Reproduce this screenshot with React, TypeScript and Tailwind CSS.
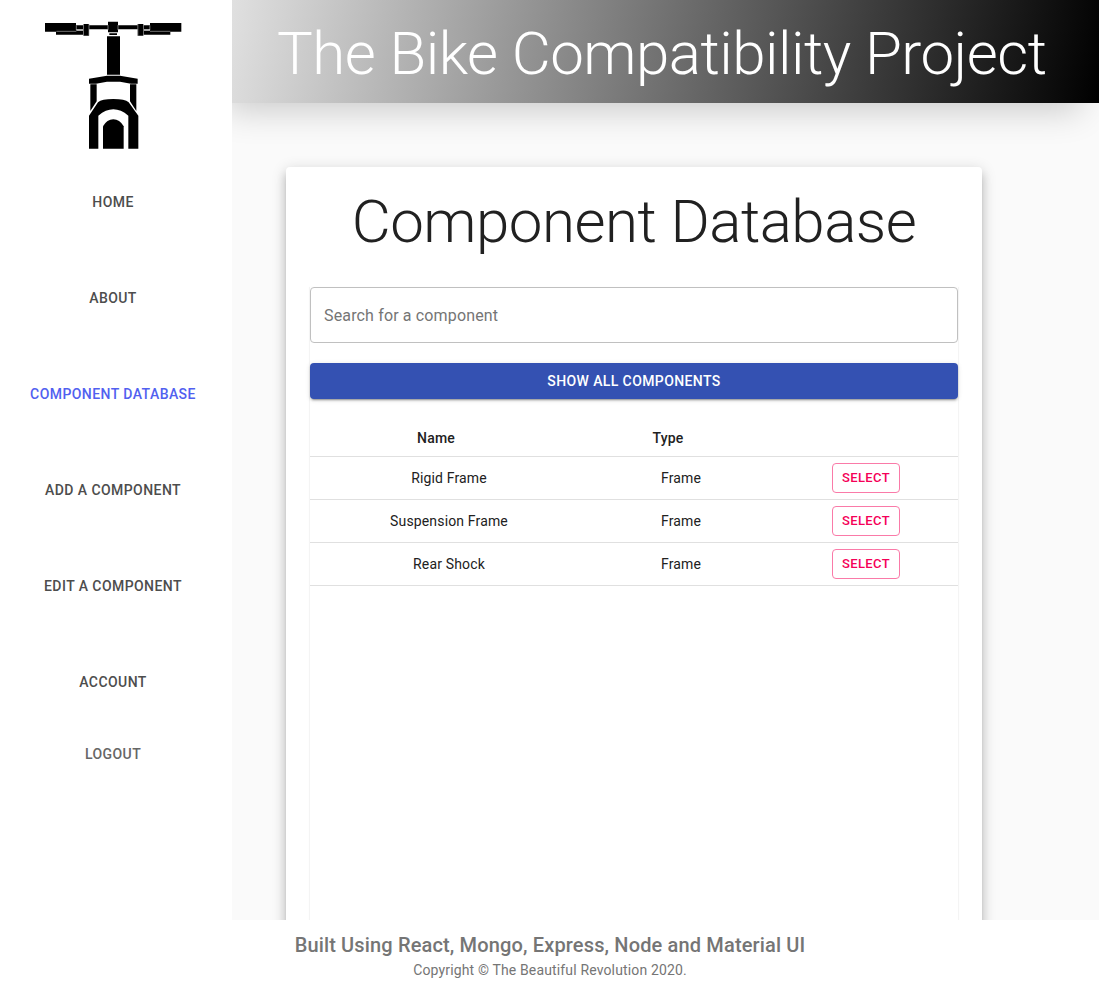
import React from "react";

const navItems = [
  { label: "Home" },
  { label: "About" },
  { label: "Component Database", active: true },
  { label: "Add a Component" },
  { label: "Edit a Component" },
  { label: "Account" },
];

const components = [
  { name: "Rigid Frame", type: "Frame" },
  { name: "Suspension Frame", type: "Frame" },
  { name: "Rear Shock", type: "Frame" },
];

function Logo() {
  return (
    <svg width="166" height="150" viewBox="0 0 498 450" fill="#000" aria-hidden="true">
      <path d="M45 39H138V46H160V42H177V46H234V35H264V46H323V42H340V46H360V39H454V65H421V74H340V77H323V58H264V67H234V58H177V77H160V74H78V65H45Z" />
      <path d="M139 46V60M359.500 46V60M160.500 42V77M177 42V77M234 45V60M264 45V60M323.500 42V77M340.500 42V77M79 64H139M360 64H421" stroke="#a8a8a8" strokeWidth="2" fill="none" />
      <path d="M139 60H159M342 60H360" stroke="#ddd" strokeWidth="4" fill="none" />
      <path d="M238 70H261V75H238ZM231 79H270V194H231Z" />
      <path d="M231 197H270L323 206V221H303L270 215H231L198 221H177V206Z" />
      <path d="M181 223H200V274L181 303ZM300 223H319V303L300 274Z" />
      <path d="M177 416V317L204 277Q215 267 250 267Q285 267 296 277L325 317V416H295V317Q250 279 205 317V416Z" />
      <path d="M219 416V349Q231 328 250 328Q269 328 281 349V416Z" />
    </svg>
  );
}

function Sidebar() {
  return (
    <aside className="relative z-10 flex w-[232px] shrink-0 flex-col bg-white">
      <div className="h-[154px] pl-[30px] pt-[10px]">
        <Logo />
      </div>
      <nav className="flex w-[226px] flex-col text-center text-sm font-medium uppercase tracking-[0.031em]">
        {navItems.map((item) => (
          <a
            key={item.label}
            className={item.active ? "flex h-24 items-center justify-center text-[#5160f0]" : "flex h-24 items-center justify-center text-[#4d4d4d]"}
          >
            {item.label}
          </a>
        ))}
        <a className="flex h-12 items-center justify-center text-[#666666]">Logout</a>
      </nav>
    </aside>
  );
}

function ComponentTable() {
  return (
    <table className="mt-5 w-full table-fixed border-collapse text-center text-sm leading-6 tracking-[0.01071em]">
      <colgroup>
        <col className="w-[286px]" />
        <col className="w-[178px]" />
        <col className="w-[184px]" />
      </colgroup>
      <thead>
        <tr className="h-[37px] border-b border-[#e0e0e0]">
          <th className="pr-[34px] pt-px font-medium">Name</th>
          <th className="pr-[34px] pt-px font-medium">Type</th>
          <th />
        </tr>
      </thead>
      <tbody>
        {components.map((c) => (
          <tr key={c.name} className="h-[43px] border-b border-[#e0e0e0]">
            <td className="pr-2">{c.name}</td>
            <td className="pr-2">{c.type}</td>
            <td>
              <button className="mx-auto flex h-[30px] w-[68px] items-center justify-center rounded border border-[#fa7aa8] pt-px text-[13px] font-medium tracking-[0.02857em] text-[#f50057]">
                SELECT
              </button>
            </td>
          </tr>
        ))}
      </tbody>
    </table>
  );
}

export default function App() {
  return (
    <div className="flex h-[984px] flex-col overflow-hidden bg-white font-['Roboto',sans-serif] text-[#212121]">
      <div className="flex h-[920px] shrink-0 overflow-hidden">
        <Sidebar />
        <main className="flex min-w-0 flex-1 flex-col bg-[#fafafa]">
          <header className="h-[103px] shrink-0 bg-[linear-gradient(100deg,#e0e0e0,#000)] pl-[45px] pt-[18px] shadow-[-12px_14px_34px_-6px_rgba(0,0,0,0.19)]">
            <h1 className="whitespace-nowrap text-[60px] font-light leading-[72px] tracking-[-0.00833em] text-white">
              The Bike Compatibility Project
            </h1>
          </header>
          <section className="ml-[54px] mt-16 h-[900px] w-[696px] shrink-0 rounded bg-white px-6 pt-[19px] shadow-[0_5px_5px_-3px_rgba(0,0,0,0.2),0_8px_10px_1px_rgba(0,0,0,0.14),0_3px_14px_2px_rgba(0,0,0,0.12)]">
            <h2 className="whitespace-nowrap text-center text-[60px] font-light leading-[72px] tracking-[-0.00833em]">
              Component Database
            </h2>
            <div className="mt-[29px] h-[760px] shadow-[0_1px_1px_1px_rgba(0,0,0,0.045)]">
              <input
                className="block h-14 w-full rounded border border-[#c0c0c0] bg-white px-[13px] text-base tracking-[0.00938em] placeholder:text-[#757575]"
                placeholder="Search for a component"
              />
              <button className="mt-5 block h-9 w-full rounded bg-[#3451b2] text-sm font-medium tracking-[0.02857em] text-white shadow-[0_3px_1px_-2px_rgba(0,0,0,0.2),0_2px_2px_0_rgba(0,0,0,0.14),0_1px_5px_0_rgba(0,0,0,0.12)]">
                SHOW ALL COMPONENTS
              </button>
              <ComponentTable />
            </div>
          </section>
        </main>
      </div>
      <footer className="bg-white pl-px pt-[9px] text-center text-[#757575]">
        <p className="text-xl font-medium leading-8 tracking-[0.0075em]">
          Built Using React, Mongo, Express, Node and Material UI
        </p>
        <p className="text-sm leading-[18px] tracking-[0.01071em]">Copyright © The Beautiful Revolution 2020.</p>
      </footer>
    </div>
  );
}
